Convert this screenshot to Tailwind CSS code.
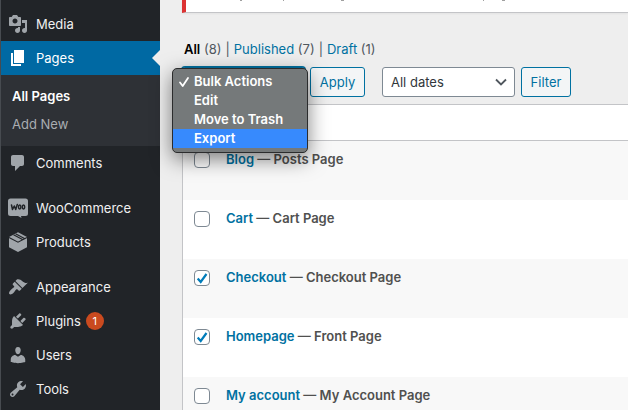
<!DOCTYPE html>
<html lang="en">
<head>
<meta charset="utf-8">
<meta name="viewport" content="width=device-width, initial-scale=1">
<title>Pages</title>
<script src="https://cdn.jsdelivr.net/npm/@tailwindcss/browser@4"></script>
</head>
<body class="flex h-screen overflow-hidden bg-[#eeeeee] font-['Inter','Liberation_Sans',sans-serif] text-[13px] leading-5 text-[#50575e]">

<nav aria-label="Main menu" class="w-40 shrink-0 border-l border-[#474b50] bg-[#212428] pt-[7px] text-[#f0f0f1]">
  <ul class="[&_svg]:size-5 [&_svg]:fill-[#a0a5aa]">
    <li><a href="#" class="flex h-[34px] items-center gap-2 pl-[7px]">
      <svg viewBox="0 0 20 20" aria-hidden="true"><path d="M13 11V4c0-.55-.45-1-1-1h-1.67L9 1H5L3.67 3H2c-.55 0-1 .45-1 1v7c0 .55.45 1 1 1h10c.55 0 1-.45 1-1zM7 4.5c1.38 0 2.5 1.12 2.5 2.5S8.38 9.5 7 9.5 4.5 8.38 4.5 7 5.62 4.5 7 4.5zM14 6h5v10.5c0 1.38-1.12 2.5-2.5 2.5S14 17.88 14 16.5s1.12-2.5 2.5-2.5c.17 0 .34.02.5.05V9h-3V6zm-4 8.05V13h2v3.5c0 1.38-1.12 2.5-2.5 2.5S7 17.88 7 16.5 8.12 14 9.5 14c.17 0 .34.02.5.05z"/></svg>Media</a></li>
    <li>
      <a href="#" aria-current="page" class="relative flex h-[34px] items-center gap-2 bg-[#0069a3] pl-[7px] text-white">
        <svg viewBox="0 0 20 20" aria-hidden="true"><path class="fill-white" d="M6 15V2h10v13H6zm-1 1h8v2H3V5h2v11z"/></svg>Pages
        <span class="absolute right-0 top-[9px] border-y-8 border-r-8 border-y-transparent border-r-[#eeeeee]"></span>
      </a>
      <ul class="bg-[#2e3136] px-[11px] pb-2 pt-[7px]">
        <li><a href="#" class="block py-1 font-semibold text-white">All Pages</a></li>
        <li><a href="#" class="block py-1 text-[#a9adb1]">Add New</a></li>
      </ul>
    </li>
    <li><a href="#" class="flex h-[34px] items-center gap-2 pl-[7px]">
      <svg viewBox="0 0 20 20" aria-hidden="true"><path d="M5 2h9c1.1 0 2 .9 2 2v7c0 1.1-.9 2-2 2h-2l-5 5v-5H5c-1.1 0-2-.9-2-2V4c0-1.1.9-2 2-2z"/></svg>Comments</a></li>
    <li class="mt-[11px]"><a href="#" class="flex h-[34px] items-center gap-2 pl-[7px]">
      <svg viewBox="0 0 20 20" aria-hidden="true"><path d="M2.500 .5h15q2.500 0 2.500 2.500v12.500q0 2.500-2.500 2.500h-4.500l.5 2-3.500-2H2.500Q0 18 0 15.500V3Q0 .5 2.500 .5z"/><g fill="none" stroke="#212428" stroke-width="1.500" stroke-linecap="round" stroke-linejoin="round"><path d="M3.500 7l1 4.500L6.300 8l1.400 3.500L9.300 6.500"/><ellipse cx="11.700" cy="9" rx="1.200" ry="2"/><ellipse cx="15.500" cy="9" rx="1.200" ry="2"/></g></svg>WooCommerce</a></li>
    <li><a href="#" class="flex h-[34px] items-center gap-2 pl-[7px]">
      <svg viewBox="0 0 20 20" aria-hidden="true"><path d="M10 .3l9 4.700v10.300l-9 4.700-9-4.700V5z"/><path d="M1 5.500l9 4.700 9-4.700M5.500 2.800l9 4.800M7.500 1.700l9 4.800" fill="none" stroke="#212428" stroke-width="1.100"/></svg>Products</a></li>
    <li class="mt-[11px]"><a href="#" class="flex h-[34px] items-center gap-2 pl-[7px]">
      <svg viewBox="0 0 20 20" aria-hidden="true"><path d="M14.480 11.060L7.410 3.990l1.500-1.500c.5-.56 2.300-.47 3.510.32 1.210.8 1.430 1.280 2.910 2.100 1.180.64 2.450 1.260 4.450.85zm-.71.71L6.700 4.700 4.930 6.470c-.39.39-.39 1.020 0 1.410l1.060 1.060c.39.39.39 1.030 0 1.420-.6.6-1.430 1.110-2.210 1.690-.35.26-.7.53-1.010.84C1.430 14.230.4 16.080 1.400 17.070c.99 1 2.840-.03 4.180-1.360.31-.31.58-.66.85-1.020.57-.78 1.080-1.610 1.690-2.210.39-.39 1.020-.39 1.410 0l1.060 1.060c.39.39 1.020.39 1.410 0z"/></svg>Appearance</a></li>
    <li><a href="#" class="flex h-[34px] items-center gap-2 pl-[7px]">
      <svg viewBox="0 0 20 20" aria-hidden="true"><path d="M13.110 4.360L9.870 7.600 8 5.730l3.240-3.240c.35-.34 1.050-.2 1.560.32.52.51.66 1.210.31 1.550zm-8 1.770l.91-1.120 9.010 9.010-1.190.84c-.71.71-2.630 1.160-3.820 1.160H6.140L4.900 17.260c-.59.59-1.540.59-2.120 0-.59-.58-.59-1.530 0-2.120l1.240-1.240v-3.880c0-1.130.4-3.190 1.090-3.890zm7.260 3.970l3.240-3.240c.34-.35 1.040-.21 1.550.31.52.51.66 1.210.31 1.550l-3.240 3.250z"/></svg>
      <span class="flex items-center gap-[5px]">Plugins <span class="grid size-[18px] place-items-center rounded-full bg-[#ca4a1f] text-[11px] leading-none text-white">1</span></span></a></li>
    <li><a href="#" class="flex h-[34px] items-center gap-2 pl-[7px]">
      <svg viewBox="0 0 20 20" aria-hidden="true"><path d="M10 9.250c-2.270 0-2.730-3.440-2.730-3.440C7 4.020 7.820 2 9.970 2c2.160 0 2.980 2.020 2.710 3.810 0 0-.41 3.440-2.680 3.440zm0 2.570L12.720 10c2.390 0 4.520 2.330 4.520 4.530v2.490s-3.650 1.130-7.240 1.130c-3.650 0-7.240-1.130-7.240-1.130v-2.490c0-2.250 1.940-4.480 4.470-4.480z"/></svg>Users</a></li>
    <li><a href="#" class="flex h-[34px] items-center gap-2 pl-[7px]">
      <svg viewBox="0 0 20 20" aria-hidden="true"><path d="M16.680 9.770c-1.340 1.340-3.300 1.670-4.950.99l-5.410 6.520c-.99.99-2.590.99-3.580 0s-.99-2.590 0-3.570l6.520-5.420c-.68-1.650-.35-3.610.99-4.950 1.280-1.280 3.120-1.620 4.720-1.060l-2.890 2.890 2.820 2.820 2.860-2.870c.53 1.580.18 3.390-1.080 4.650zM3.810 16.210c.4.39 1.040.39 1.430 0 .4-.4.4-1.040 0-1.430-.39-.4-1.030-.4-1.430 0-.39.39-.39 1.030 0 1.430z"/></svg>Tools</a></li>
  </ul>
</nav>

<main class="min-w-0 flex-1 pl-[22px]">
  <div class="h-[13px] border-b border-l-4 border-b-[#c3c4c7] border-l-[#dc3232] bg-white shadow-xs">
    <!-- descenders of the notice line scrolled off above -->
    <svg class="block h-px w-80" viewBox="0 0 320 1" fill="#a0a0a0" aria-hidden="true"><path d="M54 0h2v1h-2zM97 0h1v1h-1zM155 0h3v1h-3zM297 0h1v1h-1zM316 0h3v1h-3z"/></svg>
  </div>

  <ul class="mt-[26px] flex gap-1 pl-[2px]">
    <li><a href="#" class="font-semibold text-black">All</a> (8)</li>
    <li>|</li>
    <li><a href="#" class="text-[#0071a1]">Published</a> (7)</li>
    <li>|</li>
    <li><a href="#" class="text-[#0071a1]">Draft</a> (1)</li>
  </ul>

  <form class="mt-2 flex h-[30px] items-center">
    <div class="relative mr-[5px]">
      <select aria-label="Select bulk action" class="block h-[30px] w-[123px] appearance-none rounded-[3px] border border-[#0071a1] bg-white px-2 text-white ring-1 ring-[#0071a1]">
        <option>Bulk Actions</option><option>Edit</option><option>Move to Trash</option><option>Export</option>
      </select>
      <ul role="listbox" aria-label="Bulk actions" class="absolute -left-[10px] top-px z-10 w-[136px] rounded-[5px] border border-[#2b2c2d] bg-[#75797a] pb-1 pt-[3px] font-semibold leading-[19px] text-white shadow-[0_6px_20px_rgba(0,0,0,0.5)]">
        <li role="option" aria-selected="true" class="flex items-center pl-[5px]">
          <svg viewBox="0 0 12 12" class="mr-1 size-3" fill="none" stroke="currentColor" stroke-width="1.800" stroke-linecap="round" stroke-linejoin="round" aria-hidden="true"><path d="M2 6.500l2.700 3.500L10 2"/></svg>Bulk Actions</li>
        <li role="option" class="pl-[21px]">Edit</li>
        <li role="option" class="pl-[21px]">Move to Trash</li>
        <li role="option" class="bg-[#378afd] pl-[21px]">Export</li>
      </ul>
    </div>
    <button type="button" class="h-[30px] w-[55px] rounded-[3px] border border-[#0071a1] bg-[#f3f5f6] text-[#0071a1]">Apply</button>
    <div class="relative ml-[17px] mr-[6px]">
      <select aria-label="Filter by date" class="block h-[30px] w-[133px] appearance-none rounded-[3px] border border-[#7e8993] bg-white pl-2 pr-6 text-[#32373c]"><option>All dates</option></select>
      <svg viewBox="0 0 12 8" class="pointer-events-none absolute right-2 top-[11px] h-2 w-3" fill="none" stroke="#50575e" stroke-width="1.800" aria-hidden="true"><path d="M1 1.500l5 5 5-5"/></svg>
    </div>
    <button type="button" class="h-[30px] w-[50px] rounded-[3px] border border-[#0071a1] bg-[#f3f5f6] text-[#0071a1]">Filter</button>
  </form>

  <table class="mt-[7px] w-full border-separate border-spacing-0 border-l border-t border-[#c3c4c7] bg-white font-semibold text-[#50504f] [&_a]:text-[#0071a1] [&_td]:align-top">
    <thead><tr><th colspan="2" class="h-9 border-b border-[#c3c4c7]"></th></tr></thead>
    <tbody>
      <tr class="h-[59px] bg-[#f8f8f8]">
        <td class="w-[43px] pl-[11px] pt-[11px]"><input type="checkbox" aria-label="Select Blog" class="block size-4 appearance-none rounded-[4px] border border-[#7e8993] bg-white"></td>
        <td class="pt-2"><a href="#">Blog</a> — Posts Page</td>
      </tr>
      <tr class="h-[59px]">
        <td class="pl-[11px] pt-[11px]"><input type="checkbox" aria-label="Select Cart" class="block size-4 appearance-none rounded-[4px] border border-[#7e8993] bg-white"></td>
        <td class="pt-2"><a href="#">Cart</a> — Cart Page</td>
      </tr>
      <tr class="h-[59px] bg-[#f8f8f8]">
        <td class="pl-[11px] pt-[11px]"><span class="relative block size-4"><input type="checkbox" checked aria-label="Select Checkout" class="block size-4 appearance-none rounded-[4px] border border-[#7e8993] bg-white"><svg viewBox="0 0 16 16" class="pointer-events-none absolute inset-0 size-4" fill="none" stroke="#007cba" stroke-width="2.200" aria-hidden="true"><path d="M3.700 8.500l3 3.500 5.800-8"/></svg></span></td>
        <td class="pt-2"><a href="#">Checkout</a> — Checkout Page</td>
      </tr>
      <tr class="h-[59px]">
        <td class="pl-[11px] pt-[11px]"><span class="relative block size-4"><input type="checkbox" checked aria-label="Select Homepage" class="block size-4 appearance-none rounded-[4px] border border-[#7e8993] bg-white"><svg viewBox="0 0 16 16" class="pointer-events-none absolute inset-0 size-4" fill="none" stroke="#007cba" stroke-width="2.200" aria-hidden="true"><path d="M3.700 8.500l3 3.500 5.800-8"/></svg></span></td>
        <td class="pt-2"><a href="#">Homepage</a> — Front Page</td>
      </tr>
      <tr class="h-[59px] bg-[#f8f8f8]">
        <td class="pl-[11px] pt-[11px]"><input type="checkbox" aria-label="Select My account" class="block size-4 appearance-none rounded-[4px] border border-[#7e8993] bg-white"></td>
        <td class="pt-2"><a href="#">My account</a> — My Account Page</td>
      </tr>
    </tbody>
  </table>
</main>
</body>
</html>
